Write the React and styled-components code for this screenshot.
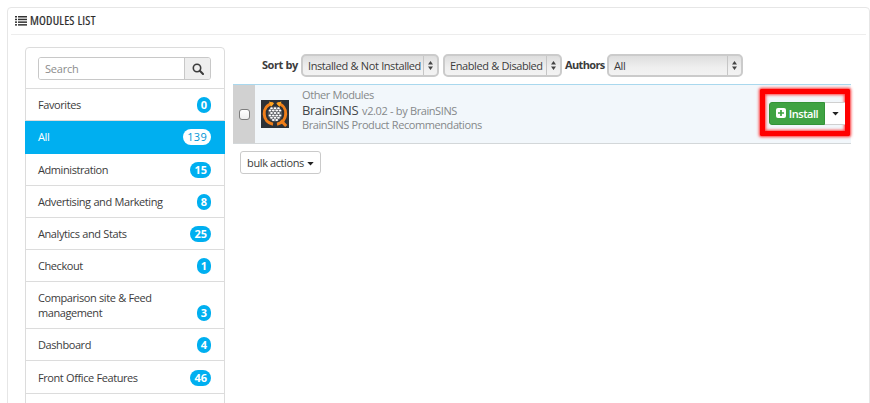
import React from "react";
import styled, { createGlobalStyle } from "styled-components";

const GlobalStyle = createGlobalStyle`
  *, *::before, *::after { box-sizing: border-box; }
  html, body { margin: 0; padding: 0; overflow: hidden; background: #fff; }
  body { font-family: "Open Sans", "Noto Sans", sans-serif; font-size: 11px; letter-spacing: -0.42px; word-spacing: 0.3px; color: #3c3c3c; }
`;

const Page = styled.div`
  width: 870px;
  height: 403px;
  padding: 7px 0 0 7px;
  overflow: hidden;
`;

const Panel = styled.section`
  width: 863px;
  height: 420px;
  padding: 0 3px;
  border: 1px solid #e6e6e6;
  border-radius: 4px;
`;

const PanelHeading = styled.header`
  display: flex;
  align-items: center;
  gap: 3px;
  height: 27px;
  padding: 0 0 1px 4px;
  border-bottom: 1px solid #ededed;
`;

const Title = styled.h1`
  margin: 0;
  font-size: 12.5px;
  font-weight: 400;
  font-stretch: 75%;
  letter-spacing: 0.2px;
  line-height: 16px;
  color: #2c2c2c;
  white-space: nowrap;
  -webkit-text-stroke: 0.2px #2c2c2c;
`;

const Columns = styled.div`
  display: grid;
  grid-template-columns: 200px 618px;
  column-gap: 8px;
  padding: 12px 0 0 14px;
`;

const Sidebar = styled.nav`
  height: 370px;
  border: 1px solid #dcdcdc;
  border-radius: 4px;
`;

const SearchBox = styled.div`
  height: 41px;
  padding: 9px 13px 0 12px;
  border-bottom: 1px solid #dcdcdc;
`;

const SearchGroup = styled.div`
  display: flex;
  height: 23px;
  border: 1px solid #c8c8c8;
  border-radius: 3px;
  overflow: hidden;
`;

const SearchInput = styled.input`
  flex: 1;
  min-width: 0;
  padding: 0 6px;
  border: 0;
  outline: 0;
  font: inherit;
  letter-spacing: -0.2px;
  background: #fff;
  &::placeholder { color: #8c8c8c; opacity: 1; }
`;

const SearchButton = styled.span`
  display: flex;
  align-items: center;
  justify-content: center;
  width: 26px;
  border-left: 1px solid #c8c8c8;
  background: #eee;
`;

const Category = styled.div`
  display: flex;
  align-items: flex-end;
  justify-content: space-between;
  height: ${(p) => p.$height}px;
  margin: ${(p) => (p.$active ? "0 -1px" : "0")};
  padding: 0 ${(p) => (p.$active ? 14 : 13)}px ${(p) => (p.$active ? 8 : 7)}px ${(p) => (p.$active ? 13 : 12)}px;
  border-bottom: 1px solid ${(p) => (p.$active ? "#00aff0" : "#dcdcdc")};
  background: ${(p) => (p.$active ? "#00aff0" : "#fff")};
  color: ${(p) => (p.$active ? "#fff" : "inherit")};
`;

const CategoryName = styled.span`
  width: 130px;
  padding-bottom: 1px;
  line-height: 14.5px;
`;

const Badge = styled.span`
  min-width: 14px;
  height: 16px;
  padding: 0 4px;
  border-radius: 8px;
  text-align: center;
  font-size: 11px;
  letter-spacing: ${(p) => (p.$active ? 0.3 : 0)}px;
  font-weight: ${(p) => (p.$active ? 400 : 700)};
  line-height: 16px;
  color: ${(p) => (p.$active ? "#0096d6" : "#fff")};
  background: ${(p) => (p.$active ? "#fff" : "#00aff0")};
`;

const Main = styled.main`
  padding-top: 6px;
`;

const Filters = styled.div`
  display: flex;
  align-items: center;
  height: 24px;
  padding-left: 29px;
  margin-bottom: 7px;
`;

const FilterLabel = styled.label`
  width: ${(p) => p.$width}px;
  font-weight: 700;
  letter-spacing: ${(p) => p.$spacing}px;
  line-height: 22px;
  white-space: nowrap;
`;

const SelectBox = styled.div`
  display: flex;
  align-items: stretch;
  width: ${(p) => p.$width}px;
  height: 23px;
  margin-right: ${(p) => p.$gap || 0}px;
  border: 2px solid #cbcbcb;
  border-radius: 5px;
  background: linear-gradient(#dedede, #efefef 60%, #f3f3f3);
`;

const SelectValue = styled.span`
  flex: 1;
  padding-left: 5px;
  line-height: 20px;
  white-space: nowrap;
`;

const SelectArrows = styled.span`
  display: flex;
  align-items: center;
  justify-content: center;
  width: 14px;
  border-left: 1px solid #c6c6c6;
`;

const ModuleRow = styled.article`
  display: grid;
  grid-template-columns: 22px 47px 1fr auto;
  height: 60px;
  border-top: 1px solid #a9d8ee;
  border-bottom: 1px solid #d3d7d9;
  background: #f2f7fb;
`;

const CheckCell = styled.div`
  display: flex;
  align-items: center;
  justify-content: center;
  background: #d1d1d1;
`;

const Checkbox = styled.span`
  width: 11px;
  height: 11px;
  border: 1px solid #7d7d7d;
  border-radius: 3px;
  background: linear-gradient(#fff, #eee);
`;

const LogoCell = styled.div`
  padding: 15px 0 0 6px;
`;

const Details = styled.div`
  padding-top: 2px;
  color: #85888a;
  white-space: nowrap;
`;

const DetailLine = styled.div`
  display: flex;
  align-items: baseline;
  gap: 4px;
  height: ${(p) => p.$height}px;
  line-height: ${(p) => p.$height}px;
`;

const ModuleName = styled.span`
  font-size: 13px;
  color: #45484a;
`;

const Highlight = styled.div`
  display: flex;
  align-items: center;
  width: 90px;
  height: 47px;
  margin: 4px 1px 0 0;
  padding: 1px 0 0 4px;
  border: 5px solid #f00;
  border-radius: 1px;
  box-shadow: 0 0 3px 1px #ff3030, inset 0 0 3px 1px #ff4040;
`;

const InstallButton = styled.button`
  display: flex;
  align-items: center;
  justify-content: center;
  gap: 3px;
  width: 56px;
  height: 23px;
  padding: 0;
  border: 1px solid #339337;
  border-radius: 3px 0 0 3px;
  background: #3fa343;
  color: #fff;
  font: inherit;
  font-weight: 600;
  letter-spacing: -0.45px;
`;

const InstallToggle = styled.button`
  display: flex;
  align-items: center;
  justify-content: center;
  width: 20px;
  height: 23px;
  padding: 2px 0 0;
  border: 1px solid #d0d0d0;
  border-width: 1px 0;
  background: #fff;
`;

const BulkButton = styled.button`
  display: flex;
  align-items: center;
  justify-content: center;
  gap: 3px;
  width: 81px;
  height: 23px;
  margin: 7px 0 0 7px;
  padding: 0 0 1px;
  border: 1px solid #cacaca;
  border-radius: 3px;
  background: #fff;
  color: inherit;
  font: inherit;
  letter-spacing: -0.4px;
`;

const CaretSlot = styled.span`
  display: flex;
  padding-top: 3px;
`;

const ListIcon = () => (
  <svg width="12" height="10" viewBox="0 0 12 10" fill="#333">
    {[0, 2.7, 5.4, 8.1].map((y) => (
      <g key={y}>
        <rect x="0" y={y} width="2" height="1.5" />
        <rect x="3" y={y} width="9" height="1.5" />
      </g>
    ))}
  </svg>
);

const SearchIcon = () => (
  <svg width="12" height="12" viewBox="0 0 12 12" fill="none" stroke="#3c3c3c">
    <circle cx="5" cy="5" r="3.7" strokeWidth="1.6" />
    <path d="M7.8 7.8 11 11" strokeWidth="2" strokeLinecap="round" />
  </svg>
);

const Arrows = () => (
  <svg width="5" height="9" viewBox="0 0 5 9" fill="#444">
    <path d="M2.5 0 5 3.6H0ZM2.5 9 0 5.4H5Z" />
  </svg>
);

const Caret = () => (
  <svg width="7" height="4" viewBox="0 0 7 4" fill="#222">
    <path d="M0.3 0H6.7L3.5 3.6Z" />
  </svg>
);

const PlusSquare = () => (
  <svg width="10" height="10" viewBox="0 0 10 10">
    <rect width="10" height="10" rx="2" fill="#fff" />
    <path d="M5 2V8M2 5H8" stroke="#3fa343" strokeWidth="1.7" />
  </svg>
);

const GRAIN_ROWS = [
  { y: 8.2, xs: [10.5, 14, 17.5] },
  { y: 10.6, xs: [9, 12.3, 15.7, 19] },
  { y: 13, xs: [10.5, 14, 17.5] },
  { y: 15.4, xs: [9, 12.3, 15.7, 19] },
  { y: 17.8, xs: [10.5, 14, 17.5] },
  { y: 20, xs: [12.3, 15.7] },
];

const BrainLogo = () => (
  <svg width="28" height="28" viewBox="0 0 28 28">
    <rect width="28" height="28" fill="#2c3137" />
    <ellipse cx="14" cy="14" rx="7.3" ry="7.8" fill="#55585b" />
    <g fill="none" stroke="#f07f1a" strokeWidth="3">
      <path d="M12 3.6C5.8 4.6 2.9 9 3.2 14.2c.2 5.4 4 9.2 8.8 10" />
      <path d="M16.5 3.6C22 4.5 25 9 24.7 14.2c-.3 5.4-4 9.2-8.7 10" />
      <path d="M19.8 20.4 25.2 26" />
    </g>
    <path d="M8 1.6 13.2 3 10 7Z M20.5 1.6 15.2 3 18.5 7Z" fill="#ffa51f" />
    <g fill="#fff">
      {GRAIN_ROWS.map(({ y, xs }) =>
        xs.map((x) => <ellipse key={`${x}-${y}`} cx={x} cy={y} rx="1.4" ry="1" />)
      )}
    </g>
  </svg>
);

const CATEGORIES = [
  { name: "Favorites", count: 0, height: 32 },
  { name: "All", count: 139, height: 33, active: true },
  { name: "Administration", count: 15, height: 32 },
  { name: "Advertising and Marketing", count: 8, height: 32 },
  { name: "Analytics and Stats", count: 25, height: 32 },
  { name: "Checkout", count: 1, height: 32 },
  { name: "Comparison site & Feed management", count: 3, height: 47 },
  { name: "Dashboard", count: 4, height: 32 },
  { name: "Front Office Features", count: 46, height: 33 },
];

const Select = ({ width, gap, children }) => (
  <SelectBox $width={width} $gap={gap}>
    <SelectValue>{children}</SelectValue>
    <SelectArrows><Arrows /></SelectArrows>
  </SelectBox>
);

export default function App() {
  return (
    <Page>
      <GlobalStyle />
      <Panel>
        <PanelHeading>
          <ListIcon />
          <Title>MODULES LIST</Title>
        </PanelHeading>
        <Columns>
          <Sidebar>
            <SearchBox>
              <SearchGroup>
                <SearchInput placeholder="Search" />
                <SearchButton><SearchIcon /></SearchButton>
              </SearchGroup>
            </SearchBox>
            {CATEGORIES.map((c) => (
              <Category key={c.name} $height={c.height} $active={c.active}>
                <CategoryName>{c.name}</CategoryName>
                <Badge $active={c.active}>{c.count}</Badge>
              </Category>
            ))}
          </Sidebar>
          <Main>
            <Filters>
              <FilterLabel $width={39} $spacing={-0.45}>Sort by</FilterLabel>
              <Select width={138} gap={4}>Installed &amp; Not Installed</Select>
              <Select width={119} gap={3}>Enabled &amp; Disabled</Select>
              <FilterLabel $width={42} $spacing={-0.65}>Authors</FilterLabel>
              <Select width={136}>All</Select>
            </Filters>
            <ModuleRow>
              <CheckCell><Checkbox /></CheckCell>
              <LogoCell><BrainLogo /></LogoCell>
              <Details>
                <DetailLine $height={15}>Other Modules</DetailLine>
                <DetailLine $height={17}><ModuleName>BrainSINS</ModuleName> v2.02 - by BrainSINS</DetailLine>
                <DetailLine $height={12}>BrainSINS Product Recommendations</DetailLine>
              </Details>
              <Highlight>
                <InstallButton><PlusSquare />Install</InstallButton>
                <InstallToggle><Caret /></InstallToggle>
              </Highlight>
            </ModuleRow>
            <BulkButton>bulk actions <CaretSlot><Caret /></CaretSlot></BulkButton>
          </Main>
        </Columns>
      </Panel>
    </Page>
  );
}
